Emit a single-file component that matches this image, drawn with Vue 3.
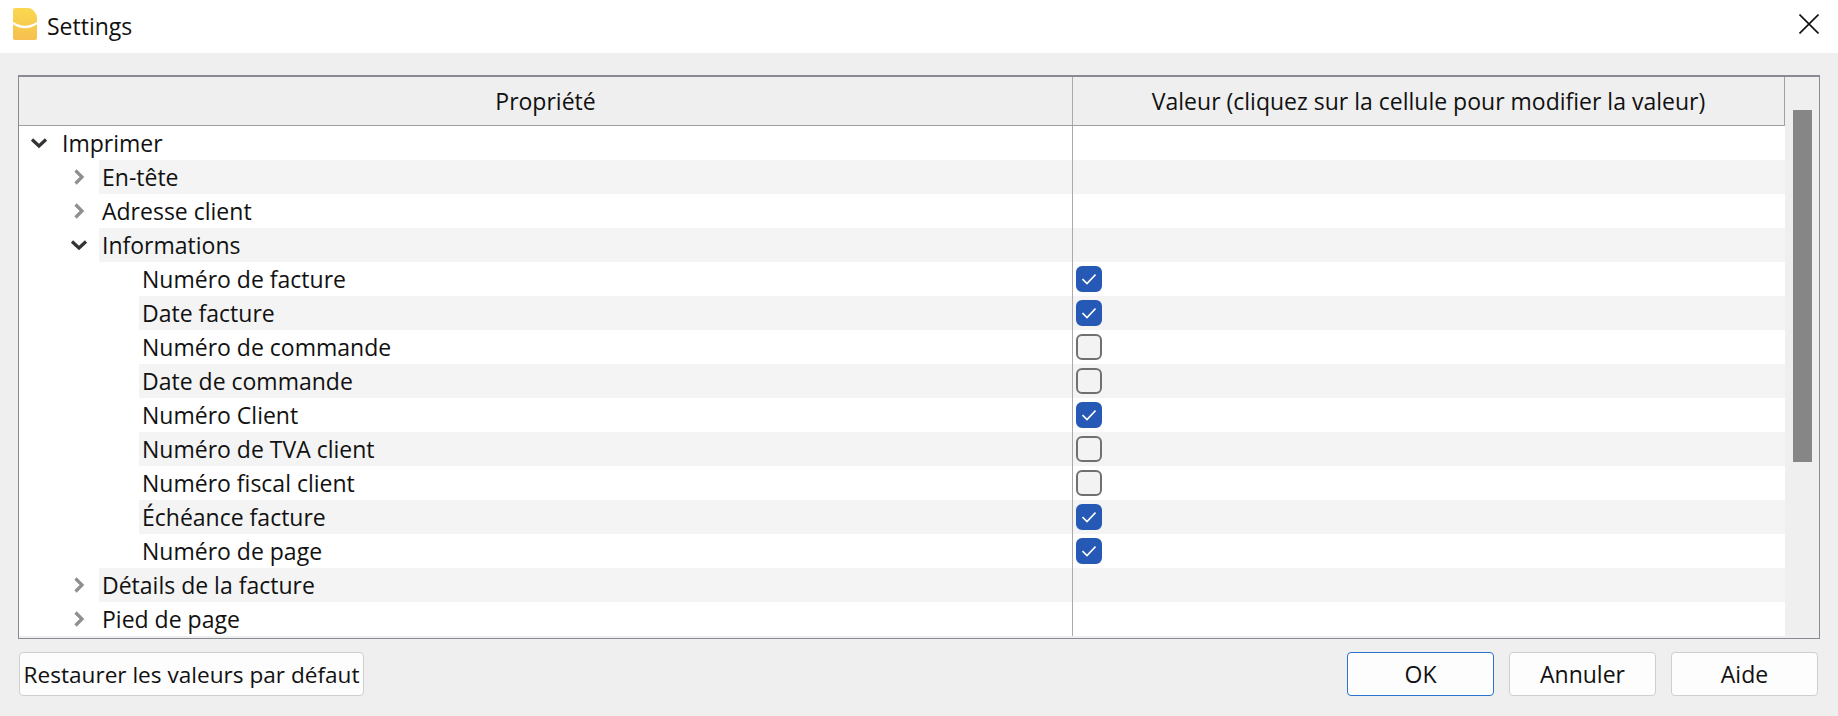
<template>
  <div class="dialog">
    <header class="titlebar">
      <svg class="app-icon" width="26" height="34" viewBox="0 0 26 34">
        <defs>
          <linearGradient id="appGrad" x1="0" y1="0" x2="0" y2="1">
            <stop offset="0%" stop-color="#fbd84f" />
            <stop offset="100%" stop-color="#f6bf4f" />
          </linearGradient>
        </defs>
        <path d="M3 0 H16 Q19 0 21 2 L24 6 Q25 8 25 10 V30 Q25 32 23 32 H3 Q1 32 1 30 V2 Q1 0 3 0 Z" fill="url(#appGrad)" />
        <path d="M1 15 Q13 23 25 15" fill="none" stroke="#fff" stroke-width="2.4" />
      </svg>
      <span class="title">Settings</span>
      <svg class="close" width="20" height="20" viewBox="0 0 20 20">
        <path d="M0.5 0.5 L19.5 19.5 M19.5 0.5 L0.5 19.5" stroke="#111" stroke-width="1.6" fill="none" />
      </svg>
    </header>

    <main class="body">
      <div class="table">
        <div class="content">
          <div class="head">
            <div class="head-cell name-col">Propriété</div>
            <div class="head-cell value-col">Valeur (cliquez sur la cellule pour modifier la valeur)</div>
          </div>
          <div
            v-for="(row, i) in rows"
            :key="row.label"
            class="row"
          >
            <div class="name-col name-cell" :class="`lvl-${row.level}`">
              <svg v-if="row.arrow" class="arrow" :class="row.arrow === 'open' ? 'dark' : ''" width="18" height="18" viewBox="0 0 18 18">
                <path
                  :d="row.arrow === 'open' ? 'M2 5.5 L9 12 L16 5.5' : 'M5.5 2.5 L12 9 L5.5 15.5'"
                  fill="none"
                  stroke-width="3.2"
                />
              </svg>
              <span class="label" :class="{ alt: i % 2 === 1 }">{{ row.label }}</span>
            </div>
            <div class="value-col value-cell" :class="{ alt: i % 2 === 1 }">
              <span v-if="row.checked === true" class="check on">
                <svg width="14" height="12" viewBox="0 0 14 12">
                  <path d="M0.5 6 L5 10.5 L13.5 1.5" fill="none" stroke="#fff" stroke-width="1.6" />
                </svg>
              </span>
              <span v-else-if="row.checked === false" class="check"></span>
            </div>
          </div>
        </div>
        <div class="scrollbar">
          <div class="thumb"></div>
        </div>
      </div>

      <footer class="buttons">
        <button class="btn restore">Restaurer les valeurs par défaut</button>
        <div class="spacer"></div>
        <button class="btn primary">OK</button>
        <button class="btn">Annuler</button>
        <button class="btn">Aide</button>
      </footer>
    </main>
  </div>
</template>

<script setup>
const rows = [
  { label: 'Imprimer', level: 0, arrow: 'open' },
  { label: 'En-tête', level: 1, arrow: 'closed' },
  { label: 'Adresse client', level: 1, arrow: 'closed' },
  { label: 'Informations', level: 1, arrow: 'open' },
  { label: 'Numéro de facture', level: 2, checked: true },
  { label: 'Date facture', level: 2, checked: true },
  { label: 'Numéro de commande', level: 2, checked: false },
  { label: 'Date de commande', level: 2, checked: false },
  { label: 'Numéro Client', level: 2, checked: true },
  { label: 'Numéro de TVA client', level: 2, checked: false },
  { label: 'Numéro fiscal client', level: 2, checked: false },
  { label: 'Échéance facture', level: 2, checked: true },
  { label: 'Numéro de page', level: 2, checked: true },
  { label: 'Détails de la facture', level: 1, arrow: 'closed' },
  { label: 'Pied de page', level: 1, arrow: 'closed' },
]
</script>

<style>
html, body {
  margin: 0;
  background: #efefef;
}
</style>

<style scoped>
.dialog {
  width: 1838px;
  height: 716px;
  display: flex;
  flex-direction: column;
  font-family: "Open Sans", "Noto Sans", sans-serif;
  font-size: 23px;
  color: #111;
  background: #efefef;
  overflow: hidden;
}

.titlebar {
  height: 53px;
  flex: none;
  background: #fff;
  display: flex;
  align-items: center;
  padding: 0 19px 0 12px;
}

.app-icon {
  margin: -3px 9px 0 0;
}

.title {
  flex: 1;
  margin-top: -1px;
}

.close {
  margin-top: -5px;
}

.body {
  flex: 1;
  padding: 22px 18px 0;
  display: flex;
  flex-direction: column;
}

.table {
  width: 1802px;
  height: 564px;
  box-sizing: border-box;
  border: 1px solid #8a8a92;
  border-top-width: 2px;
  display: flex;
  background: #efefef;
}

.content {
  width: 1766px;
  flex: none;
}

.head {
  height: 48px;
  display: flex;
  background: #efefef;
  border-bottom: 1px solid #a0a0a0;
  border-right: 1px solid #a0a0a0;
}

.head-cell {
  display: flex;
  align-items: center;
  justify-content: center;
}

.name-col {
  width: 1054px;
  flex: none;
  box-sizing: border-box;
  border-right: 1px solid #aaa;
}

.value-col {
  flex: 1;
}

.row {
  height: 34px;
  display: flex;
  background: #fff;
}

.name-cell {
  display: flex;
  align-items: center;
  position: relative;
}

.lvl-0 { padding-left: 40px; }
.lvl-1 { padding-left: 80px; }
.lvl-2 { padding-left: 120px; }

.label {
  flex: 1;
  align-self: stretch;
  display: flex;
  align-items: center;
  padding-left: 3px;
}

.alt {
  background: #f4f4f4;
}

.arrow {
  position: absolute;
  stroke: #8f8f8f;
}

.lvl-0 .arrow { left: 11px; }
.lvl-1 .arrow { left: 51px; }

.arrow.dark {
  stroke: #333;
}

.value-cell {
  display: flex;
  align-items: center;
  padding-left: 3px;
}

.check {
  width: 26px;
  height: 26px;
  box-sizing: border-box;
  border: 2px solid #707070;
  border-radius: 6px;
  background: #f3f3f3;
  display: flex;
  align-items: center;
  justify-content: center;
}

.check.on {
  background: #2559b5;
  border-color: #2559b5;
}

.scrollbar {
  flex: 1;
  padding: 33px 7px 0 8px;
}

.thumb {
  height: 352px;
  background: #868686;
}

.buttons {
  display: flex;
  gap: 15px;
  padding: 13px 2px 0 1px;
}

.spacer {
  flex: 1;
}

.btn {
  width: 147px;
  height: 44px;
  box-sizing: border-box;
  border: 1px solid #cfcfcf;
  border-radius: 4px;
  background: #fdfdfd;
  font: inherit;
  color: #111;
  padding: 0;
}

.btn.restore {
  width: 345px;
  font-size: 22.6px;
}

.btn.primary {
  border-color: #2a74cf;
}
</style>
